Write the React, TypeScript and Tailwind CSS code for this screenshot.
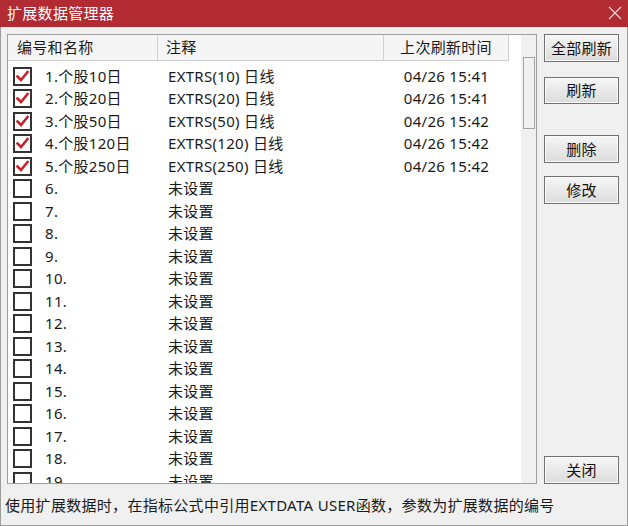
import React from 'react'

const font = "font-['Noto_Sans','Noto_Sans_CJK_SC',sans-serif] tracking-[0.3px]"

interface Row {
  no: number
  name: string
  note: string
  time: string
  checked: boolean
}

const rows: Row[] = [
  { no: 1, name: '个股10日', note: 'EXTRS(10) 日线', time: '04/26 15:41', checked: true },
  { no: 2, name: '个股20日', note: 'EXTRS(20) 日线', time: '04/26 15:41', checked: true },
  { no: 3, name: '个股50日', note: 'EXTRS(50) 日线', time: '04/26 15:42', checked: true },
  { no: 4, name: '个股120日', note: 'EXTRS(120) 日线', time: '04/26 15:42', checked: true },
  { no: 5, name: '个股250日', note: 'EXTRS(250) 日线', time: '04/26 15:42', checked: true },
]
for (let i = 6; i <= 19; i++) {
  rows.push({ no: i, name: '', note: '未设置', time: '', checked: false })
}

function Check({ checked }: { checked: boolean }) {
  return (
    <div className="w-[19px] h-[19px] border-2 border-[#333] bg-white flex items-center justify-center shrink-0">
      {checked && (
        <svg width="15" height="15" viewBox="0 0 15 15">
          <path d="M2.5 7.5 L6 11 L12.5 3" fill="none" stroke="#c8202d" strokeWidth="2.6" strokeLinecap="square" />
        </svg>
      )}
    </div>
  )
}

function Btn({ label, className }: { label: string; className?: string }) {
  return (
    <button
      className={
        'w-[75px] flex items-center justify-center border border-[#707070] shadow-[inset_0_0_0_1px_#fbfbfb] bg-linear-to-b from-[#f6f6f6] to-[#dcdcdc] text-[15px] leading-none text-[#111] ' +
        (className || '')
      }
    >
      {label}
    </button>
  )
}

export default function App() {
  return (
    <div className={`w-[628px] h-[526px] flex flex-col bg-[#f0f0f0] border-x border-b border-[#9c9c9c] ${font}`}>
      {/* title bar */}
      <div className="h-[27px] -mx-px bg-[#b22a32] flex items-center justify-between pl-[7px] pr-[6px] shrink-0">
        <span className="text-white text-[15px] leading-none">扩展数据管理器</span>
        <svg width="14" height="14" viewBox="0 0 14 14" className="mt-[-2px]">
          <path d="M1 1 L13 13 M13 1 L1 13" stroke="#f3d6d6" strokeWidth="1.2" />
        </svg>
      </div>

      <div className="flex pt-[7px] pl-[6px] pr-[7px] gap-[7px]">
        {/* list */}
        <div className="w-[530px] h-[450px] border border-[#a0a0a0] bg-white flex overflow-hidden">
          <div className="w-[507px] flex flex-col">
            <div className="h-[26px] flex shrink-0 text-[15px] text-[#1a1a1a] leading-none">
              <div className="w-[150px] bg-[#f5f5f5] border-r border-b border-[#d0d0d0] flex items-center pl-[9px]">编号和名称</div>
              <div className="w-[226px] bg-[#f5f5f5] border-r border-b border-[#d0d0d0] flex items-center pl-[8px]">注释</div>
              <div className="w-[125px] bg-[#f5f5f5] border-r border-b border-[#d0d0d0] flex items-center justify-center">上次刷新时间</div>
            </div>
            <div className="pt-[4px] text-[15px] text-[#1a1a1a] leading-none">
              {rows.map((r) => (
                <div key={r.no} className="h-[22.5px] flex items-center">
                  <div className="w-[150px] flex items-center pl-[5px]">
                    <Check checked={r.checked} />
                    <span className="ml-[13px] whitespace-nowrap">
                      {r.no}.{r.name}
                    </span>
                  </div>
                  <div className="w-[226px] pl-[10px] whitespace-nowrap">{r.note}</div>
                  <div className="w-[125px] text-center whitespace-nowrap">{r.time}</div>
                </div>
              ))}
            </div>
          </div>
          {/* scrollbar */}
          <div className="ml-[6px] flex-1 bg-[#f0f0f0] pt-[22px] pl-[2px]">
            <div className="w-[12px] h-[72px] border-[1.5px] border-[#a3a3a3] bg-[#f0f0f0]" />
          </div>
        </div>

        {/* buttons */}
        <div className="flex flex-col h-[450px]">
          <Btn label="全部刷新" className="h-[28px]" />
          <Btn label="刷新" className="h-[27px] mt-[15px]" />
          <Btn label="删除" className="h-[28px] mt-[31px]" />
          <Btn label="修改" className="h-[28px] mt-[13px]" />
          <Btn label="关闭" className="h-[28px] mt-auto" />
        </div>
      </div>

      <div className="flex-1 flex items-center pl-[4px] pt-[1px] text-[15px] text-[#1a1a1a] leading-none whitespace-nowrap">
        使用扩展数据时，在指标公式中引用EXTDATA USER函数，参数为扩展数据的编号
      </div>
    </div>
  )
}
